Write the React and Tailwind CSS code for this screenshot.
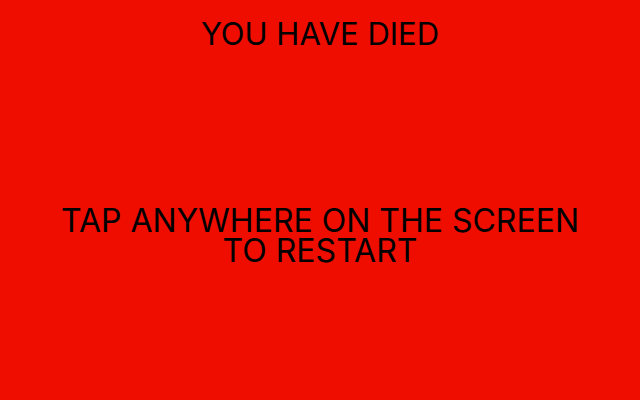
export default function App() {
  return (
    <div
      className="w-[640px] h-[400px] bg-[#ef0d00] text-black flex flex-col items-center text-center"
      style={{ fontFamily: 'Inter, sans-serif' }}
    >
      <h1 className="mt-[19px] text-[31px] leading-[30px] font-normal">YOU HAVE DIED</h1>
      <p className="mt-[157px] text-[32px] leading-[30px]">
        TAP ANYWHERE ON THE SCREEN
        <br />
        TO RESTART
      </p>
    </div>
  );
}
